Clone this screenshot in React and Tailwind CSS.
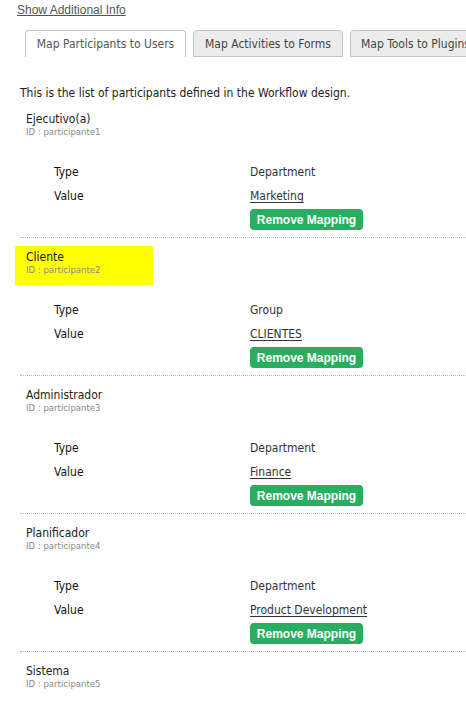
import React from 'react';

const participants = [
    { name: 'Ejecutivo(a)', id: 'participante1', type: 'Department', value: 'Marketing' },
    { name: 'Cliente', id: 'participante2', type: 'Group', value: 'CLIENTES', highlight: true },
    { name: 'Administrador', id: 'participante3', type: 'Department', value: 'Finance' },
    { name: 'Planificador', id: 'participante4', type: 'Department', value: 'Product Development' },
    { name: 'Sistema', id: 'participante5' },
];

function Participant({ p }) {
    return (
        <div>
            <div className={`ml-[15px] mt-[8px] w-[138px] h-[39px] pl-[11px] pt-[4px] ${p.highlight ? 'bg-[#ffff00]' : ''}`}>
                <div className="text-[12px] leading-[14px] text-[#222]">{p.name}</div>
                <div className="text-[9.5px] leading-[11px] text-[#8a8a8a] font-medium">ID : {p.id}</div>
            </div>
            {p.type && (
                <div className="mt-[13px]">
                    <div className="flex h-[24px] items-center">
                        <div className="w-[196px] pl-[54px] box-content text-[12px] text-[#111]">Type</div>
                        <div className="text-[12px] text-[#333]">{p.type}</div>
                    </div>
                    <div className="flex h-[24px] items-center">
                        <div className="w-[196px] pl-[54px] box-content text-[12px] text-[#111]">Value</div>
                        <a href="#" className="text-[12px] text-[#333] underline underline-offset-2">{p.value}</a>
                    </div>
                    <div className="flex pl-[250px] mt-[1px]">
                        <button className="block h-[21px] w-[113px] rounded-[4px] bg-[#27ae60] text-white text-[12px] font-bold leading-none" style={{ fontFamily: '"Liberation Sans", Arial, sans-serif' }}>
                            Remove Mapping
                        </button>
                    </div>
                    <div className="ml-[20px] mt-[7px] border-t border-dotted border-[#bbb]"></div>
                </div>
            )}
        </div>
    );
}

export default function App() {
    return (
        <div className="min-h-screen bg-white pt-[3px]" style={{ fontFamily: '"DejaVu Sans Condensed", "DejaVu Sans", sans-serif' }}>
            <a href="#" className="ml-[17px] block text-[12px] leading-[14px] text-[#555] underline" style={{ fontFamily: '"Liberation Sans", Arial, sans-serif' }}>
                Show Additional Info
            </a>
            <div className="mt-[13px] flex gap-[7px] pl-[25px] overflow-hidden whitespace-nowrap">
                <div className="shrink-0 h-[27px] w-[161px] flex items-center justify-center rounded-t-[4px] border border-b-0 border-[#c5c5c5] bg-white text-[12px] text-[#555]">
                    Map Participants to Users
                </div>
                <div className="shrink-0 h-[27px] w-[150px] flex items-center justify-center rounded-t-[4px] border border-[#c5c5c5] bg-[#ececec] text-[12px] text-[#454545]">
                    Map Activities to Forms
                </div>
                <div className="shrink-0 h-[27px] px-[10px] flex items-center rounded-t-[4px] border border-[#c5c5c5] bg-[#ececec] text-[12px] text-[#454545]">
                    Map Tools to Plugins
                </div>
            </div>
            <p className="mt-[29px] ml-[20px] text-[12px] leading-[14px] text-[#222]">
                This is the list of participants defined in the Workflow design.
            </p>
            {participants.map((p) => (
                <Participant key={p.id} p={p} />
            ))}
        </div>
    );
}
